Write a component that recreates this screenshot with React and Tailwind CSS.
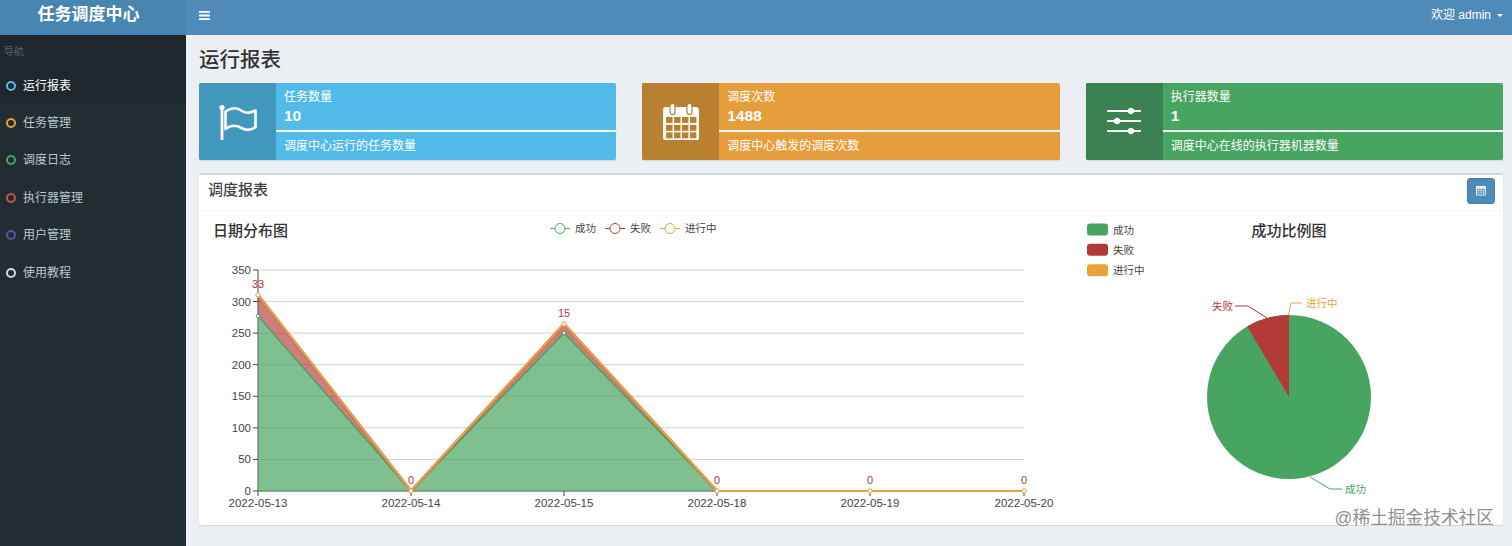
import React from 'react';

const NAV = [
  { label: '运行报表', ring: 'border-[#52bbe9]', active: true },
  { label: '任务管理', ring: 'border-[#e69e3c]' },
  { label: '调度日志', ring: 'border-[#48a461]' },
  { label: '执行器管理', ring: 'border-[#c5524a]' },
  { label: '用户管理', ring: 'border-[#5a4f9f]' },
  { label: '使用教程', ring: 'border-[#d5d9dc]' },
];

const GREEN = '#48a461';
const RED = '#b23b38';
const ORANGE = '#e9a13b';
const AXIS = '#444444';

const CHART_X = [258, 411, 564, 717, 870, 1024];
const DATES = ['2022-05-13', '2022-05-14', '2022-05-15', '2022-05-18', '2022-05-19', '2022-05-20'];
const SUCCESS_Y = [316, 491, 333, 491, 491, 491];
const TOTAL_Y = [295, 491, 324, 491, 491, 491];
const FAIL_LABELS = ['33', '0', '15', '0', '0', '0'];
const TICKS = [0, 50, 100, 150, 200, 250, 300, 350];

const tickY = (v) => 491 - (v * 221) / 350;
const points = (ys) => CHART_X.map((x, i) => `${x},${ys[i]}`).join(' ');
const band = (top, bottom) =>
  [...CHART_X.map((x, i) => `${x},${top[i]}`), ...CHART_X.map((x, i) => `${x},${bottom[i]}`).reverse()].join(' ');

const FlagIcon = () => (
  <svg width="38" height="36" viewBox="0 0 38 36" fill="none" stroke="white">
    <circle cx="3" cy="3.5" r="2.6" fill="white" stroke="none" />
    <path d="M3 4V35" strokeWidth="2.8" strokeLinecap="round" />
    <path d="M6.5 7.5C13 3 19 4 23 7C27 9.500 32 9 36.500 6.500V23C32 26.500 27 26.500 22.500 24C18 21.500 12 20.500 6.500 25Z" strokeWidth="2.6" strokeLinejoin="round" />
  </svg>
);

const CalendarIcon = ({ size = 36, cell = '#b98030' }) => (
  <svg width={size} height={size * 1.05} viewBox="0 0 36 38">
    <rect x="0" y="4" width="36" height="34" rx="3" fill="white" />
    <rect x="7" y="0.500" width="5" height="11" rx="2.500" fill="white" stroke={cell} strokeWidth="1.200" />
    <rect x="24" y="0.500" width="5" height="11" rx="2.500" fill="white" stroke={cell} strokeWidth="1.200" />
    {[14, 22, 29.500].map((y) =>
      [3, 11, 19, 27].map((x) => <rect key={`${x}-${y}`} x={x} y={y} width="6.500" height="6" fill={cell} />)
    )}
  </svg>
);

const SlidersIcon = () => (
  <svg className="mb-[2px]" width="36" height="30" viewBox="0 0 36 30" fill="white" stroke="white">
    <path d="M1 5H35M1 15H35M1 25H35" strokeWidth="1.800" />
    <circle cx="25" cy="5" r="2.800" />
    <circle cx="11" cy="15" r="2.800" />
    <circle cx="25" cy="25" r="2.800" />
  </svg>
);

const StatCard = ({ icon, iconBg, bg, title, value, desc }) => (
  <div className={`flex h-[77px] overflow-hidden rounded-[2px] text-white shadow-[0_1px_1px_rgba(0,0,0,0.1)] ${bg}`}>
    <div className={`flex w-[77px] shrink-0 items-center justify-center ${iconBg}`}>{icon}</div>
    <div className="flex min-w-0 flex-1 flex-col">
      <div className="flex h-[47px] flex-col px-[8px] pt-[4px]">
        <span className="translate-y-[1px] text-[12px] leading-[18px]">{title}</span>
        <span className="text-[15.5px] font-bold leading-[21px]">{value}</span>
      </div>
      <div className="h-[2px] bg-white" />
      <div className="flex-1 px-[8px] pt-[5px] text-[12px] leading-[18px]">{desc}</div>
    </div>
  </div>
);

const LineLegend = ({ x, color, label }) => (
  <g>
    <path d={`M${x} 228.500H${x + 20}`} stroke={color} strokeWidth="1" />
    <circle cx={x + 10} cy="228.500" r="5" fill="white" stroke={color} strokeWidth="1" />
    <text x={x + 25} y="232" fontSize="10.500" fill={AXIS}>{label}</text>
  </g>
);

const AreaChart = () => (
  <svg width="880" height="314" viewBox="199 211 880 314" className="shrink-0">
    <text x="213" y="236" fontSize="15" fontWeight="500" fill="#333333">日期分布图</text>
    <LineLegend x={550} color={GREEN} label="成功" />
    <LineLegend x={605} color={RED} label="失败" />
    <LineLegend x={660} color={ORANGE} label="进行中" />

    {TICKS.slice(1).map((v) => (
      <line key={v} x1="258" x2="1024" y1={tickY(v)} y2={tickY(v)} stroke="#d0d0d0" strokeWidth="1" />
    ))}

    <line x1="258" x2="258" y1="270" y2="491" stroke={AXIS} strokeWidth="1" />
    <line x1="258" x2="1024" y1="491" y2="491" stroke={AXIS} strokeWidth="1" />
    {TICKS.map((v) => (
      <g key={v}>
        <line x1="253" x2="258" y1={tickY(v)} y2={tickY(v)} stroke={AXIS} strokeWidth="1" />
        <text x="251" y={tickY(v) + 4} fontSize="11.500" textAnchor="end" fill={AXIS}>{v}</text>
      </g>
    ))}

    <polygon points={band(SUCCESS_Y, [491, 491, 491, 491, 491, 491])} fill={GREEN} fillOpacity="0.7" />
    <polygon points={band(TOTAL_Y, SUCCESS_Y)} fill={RED} fillOpacity="0.65" />
    <polyline points={points(SUCCESS_Y)} fill="none" stroke={GREEN} strokeWidth="1.500" />
    <polyline points="258,295 411,491 564,324 717,491" fill="none" stroke="#b23b38" strokeOpacity="0.55" strokeWidth="3" />
    <polyline points={points(TOTAL_Y)} fill="none" stroke={ORANGE} strokeWidth="2" />

    {CHART_X.map((x, i) => (
      <g key={x}>
        <line x1={x} x2={x} y1="491" y2="496" stroke={AXIS} strokeWidth="1" />
        <text x={x} y="507" fontSize="11.500" textAnchor="middle" fill={AXIS}>{DATES[i]}</text>
        <circle cx={x} cy={SUCCESS_Y[i]} r="1.800" fill="white" stroke={GREEN} strokeWidth="1" />
        <circle cx={x} cy={TOTAL_Y[i]} r="2.200" fill="white" stroke={ORANGE} strokeWidth="1" />
        <text x={x} y={TOTAL_Y[i] - 7} fontSize="11" textAnchor="middle" fill={RED}>{FAIL_LABELS[i]}</text>
      </g>
    ))}
  </svg>
);

const RectLegend = ({ y, color, label }) => (
  <g>
    <rect x="1087" y={y} width="21" height="12" rx="3" fill={color} />
    <text x="1113" y={y + 10} fontSize="10.500" fill={AXIS}>{label}</text>
  </g>
);

const PieChart = () => (
  <svg width="424" height="314" viewBox="1079 211 424 314" className="shrink-0">
    <text x="1289" y="236" fontSize="15" fontWeight="500" textAnchor="middle" fill="#333333">成功比例图</text>
    <RectLegend y={223.500} color={GREEN} label="成功" />
    <RectLegend y={243.800} color={RED} label="失败" />
    <RectLegend y={264.300} color={ORANGE} label="进行中" />

    <circle cx="1289" cy="397" r="82" fill={GREEN} />
    <path d="M1289 397L1247.100 326.500A82 82 0 0 1 1289 315Z" fill={RED} />

    <path d="M1235 306H1248L1267 318" fill="none" stroke={RED} strokeWidth="1" />
    <text x="1212" y="310" fontSize="10.500" fill={RED}>失败</text>
    <path d="M1288.500 315L1291 303H1302" fill="none" stroke={ORANGE} strokeWidth="1" />
    <text x="1306" y="307" fontSize="10.500" fill={ORANGE}>进行中</text>
    <path d="M1310 477L1330 489H1342" fill="none" stroke={GREEN} strokeWidth="1" />
    <text x="1345" y="493" fontSize="10.500" fill={GREEN}>成功</text>
  </svg>
);

const App = () => {
  return (
    <div className="relative flex h-screen flex-col overflow-hidden bg-[#ecf0f5] font-['Liberation_Sans','Noto_Sans_CJK_SC',sans-serif] text-[#333333]">
      {/* Header */}
      <header className="flex h-[35px] shrink-0 items-center bg-[#4f8ab8] text-white">
        <div className="flex h-full w-[186px] items-center justify-center bg-[#4985b1] pb-[6px] pr-[9px] text-[17px] font-bold">任务调度中心</div>
        <div className="flex flex-1 items-center justify-between pb-[5px] pl-[13px] pr-[9px]">
          <svg width="11" height="9" viewBox="0 0 11 9" fill="white">
            <rect width="11" height="1.800" rx="0.500" />
            <rect y="3.600" width="11" height="1.800" rx="0.500" />
            <rect y="7.200" width="11" height="1.800" rx="0.500" />
          </svg>
          <div className="flex items-center gap-[6px] text-[12px]">
            <span>欢迎 admin</span>
            <span className="h-0 w-0 border-x-[3px] border-t-[3px] border-x-transparent border-t-white" />
          </div>
        </div>
      </header>

      <div className="flex min-h-0 flex-1">
        {/* Sidebar */}
        <aside className="w-[186px] shrink-0 bg-[#222d32]">
          <div className="flex h-[32px] items-center bg-[#1e272c] pl-[4px] text-[10px] text-[#4b646f]">导航</div>
          {NAV.map((item) => (
            <div
              key={item.label}
              className={`flex h-[37.4px] items-center gap-[7px] pl-[6px] text-[12px] ${item.active ? 'bg-[#1e282c] text-white' : 'text-[#b8c7ce]'}`}
            >
              <span className={`h-[10px] w-[10px] rounded-full border-2 ${item.ring}`} />
              <span>{item.label}</span>
            </div>
          ))}
        </aside>

        {/* Main */}
        <main className="flex min-w-0 flex-1 flex-col px-[13px] pr-[9px]">
          <h1 className="flex h-[48px] shrink-0 items-center pt-[2px] text-[20.5px] font-medium leading-none text-[#333333]">运行报表</h1>

          <div className="grid grid-cols-3 gap-x-[26px]">
            <StatCard
              icon={<FlagIcon />}
              iconBg="bg-[#4297bd]"
              bg="bg-[#52bbe9]"
              title="任务数量"
              value="10"
              desc="调度中心运行的任务数量"
            />
            <StatCard
              icon={<CalendarIcon />}
              iconBg="bg-[#b98030]"
              bg="bg-[#e69e3c]"
              title="调度次数"
              value="1488"
              desc="调度中心触发的调度次数"
            />
            <StatCard
              icon={<SlidersIcon />}
              iconBg="bg-[#3a8050]"
              bg="bg-[#48a461]"
              title="执行器数量"
              value="1"
              desc="调度中心在线的执行器机器数量"
            />
          </div>

          {/* Report box */}
          <section className="mt-[13px] rounded-[2px] border-t-[2px] border-[#d2d6de] bg-white shadow-[0_1px_1px_rgba(0,0,0,0.1)]">
            <div className="flex h-[36px] items-center justify-between border-b border-[#f4f4f4] pb-[4px] pl-[9px] pr-[8px]">
              <h3 className="text-[15px] font-medium text-[#444444]">调度报表</h3>
              <button className="flex h-[26px] w-[28px] items-center justify-center rounded-[3px] border border-[#4580ad] bg-[#4f8ab8]">
                <CalendarIcon size={10} cell="#4f8ab8" />
              </button>
            </div>
            <div className="flex">
              <AreaChart />
              <PieChart />
            </div>
          </section>
        </main>
      </div>

      {/* Watermark */}
      <span className="absolute bottom-[17px] right-[18px] text-[17.7px] leading-[22px] text-[#8f8f8f] [text-shadow:0_0_2px_rgba(255,255,255,0.9)]">@稀土掘金技术社区</span>
    </div>
  );
};

export default App;
